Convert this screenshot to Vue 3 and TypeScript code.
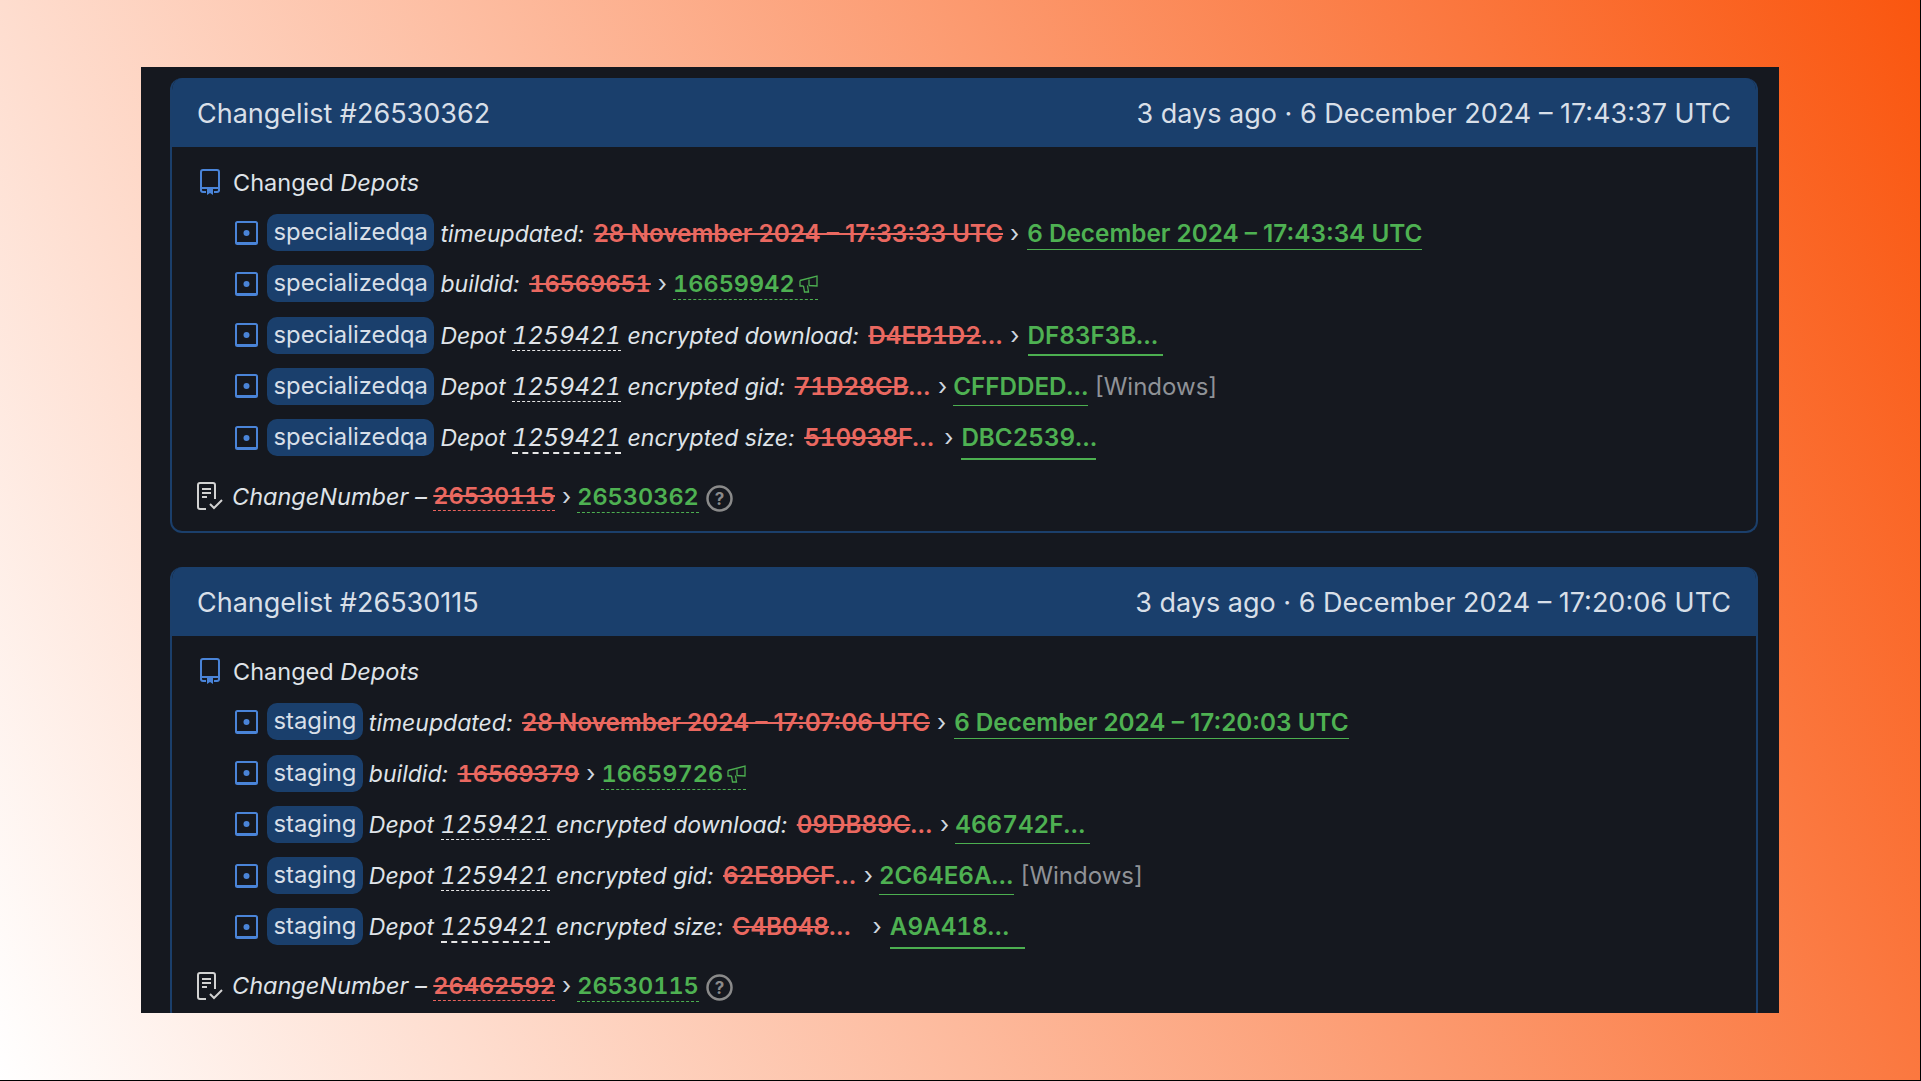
<script setup lang="ts">
type Kind = 'label' | 'old' | 'sep' | 'new' | 'ref' | 'muted';
interface Seg { k: Kind; t: string; u?: string; w?: number; mega?: boolean; thick?: boolean }
interface Row { segs: Seg[] }
interface Card {
  id: string; when: string; tag: string; rows: Row[]; oldN: string; newN: string;
}
const l = (t: string): Seg => ({ k: 'label', t });
const o = (t: string, w?: number): Seg => ({ k: 'old', t, w });
const s: Seg = { k: 'sep', t: '›' };
const n = (t: string, u = 'solid', w?: number, mega = false): Seg => ({ k: 'new', t, u, w, mega });
const ref = (thick = false): Seg => ({ k: 'ref', t: '1259421', thick });

const body = (t: string) => t.replace('...', '');
const dots = (t: string) => (t.endsWith('...') ? '...' : '');
const shape = (t: string) => (/^\d+$/.test(t) ? 'num' : t.includes('–') ? 'date' : 'hex');

const build = (a: string[], u: string[]): Row[] => [
  { segs: [l('timeupdated: '), o(a[0]), s, n(a[1], 'line')] },
  { segs: [l('buildid: '), o(a[2]), s, n(a[3], 'dashed', undefined, true)] },
  { segs: [l('Depot '), ref(), l(' encrypted download: '), o(a[4]), s, n(a[5], u[0], 135)] },
  { segs: [l('Depot '), ref(), l(' encrypted gid: '), o(a[6]), s, n(a[7], u[1], 135), { k: 'muted', t: ' [Windows]' }] },
  { segs: [l('Depot '), ref(true), l(' encrypted size: '), o(a[8], 133), s, n(a[9], u[2], 135)] },
];

const cards: Card[] = [
  {
    id: '26530362', when: '3 days ago · 6 December 2024 – 17:43:37 UTC', tag: 'specializedqa',
    rows: build([
      '28 November 2024 – 17:33:33 UTC', '6 December 2024 – 17:43:34 UTC',
      '16569651', '16659942',
      'D4EB1D2...', 'DF83F3B...',
      '71D28CB...', 'CFFDDED...',
      '510938F...', 'DBC2539...',
    ], ['hash-b', 'hash-a', 'hash-c']),
    oldN: '26530115', newN: '26530362',
  },
  {
    id: '26530115', when: '3 days ago · 6 December 2024 – 17:20:06 UTC', tag: 'staging',
    rows: build([
      '28 November 2024 – 17:07:06 UTC', '6 December 2024 – 17:20:03 UTC',
      '16569379', '16659726',
      '09DB89C...', '466742F...',
      '62E8DCF...', '2C64E6A...',
      'C4B048...', 'A9A418...',
    ], ['hash-a', 'hash-a', 'hash-c']),
    oldN: '26462592', newN: '26530115',
  },
];
</script>

<template>
  <div class="page">
    <main class="panel">
      <section v-for="card in cards" :key="card.id" class="card">
        <header class="head">
          <span>Changelist #{{ card.id }}</span>
          <span>{{ card.when }}</span>
        </header>
        <div class="body">
          <div class="title">
            <svg class="book" viewBox="0 0 20 26" fill="none" stroke="#4a84d8" stroke-width="2">
              <path d="M1 22V3a2 2 0 0 1 2-2h14a2 2 0 0 1 2 2v19" />
              <path d="M1 19h18" />
              <path d="M1 21a2 2 0 0 0 2 2h3M19 21a2 2 0 0 1-2 2h-3" />
              <path d="M7 20h6v6l-3-2-3 2z" fill="#4a84d8" stroke="none" />
            </svg>
            <span>Changed <em>Depots</em></span>
          </div>
          <ul class="rows">
            <li v-for="(row, i) in card.rows" :key="i" class="row">
              <svg class="sq" viewBox="0 0 23 24" fill="none">
                <rect x="1" y="1" width="21" height="22" rx="1.500" stroke="#4a84d8" stroke-width="2" />
                <path d="M1 22h21" stroke="#4a84d8" stroke-width="2" />
                <circle cx="11.500" cy="12" r="3" fill="#4a84d8" />
              </svg>
              <span class="tag">{{ card.tag }}</span>
              <span class="text">
                <template v-for="(seg, j) in row.segs" :key="j">
                  <span v-if="seg.k === 'label'" class="label">{{ seg.t }}</span>
                  <span v-else-if="seg.k === 'ref'" class="label ref" :class="{ thick: seg.thick }">{{ seg.t }}</span>
                  <span v-else-if="seg.k === 'old'" class="old" :class="shape(seg.t)" :style="seg.w ? { width: seg.w + 'px' } : undefined"><span class="strike">{{ body(seg.t) }}</span><span class="dots">{{ dots(seg.t) }}</span></span>
                  <span v-else-if="seg.k === 'sep'" class="sep">{{ seg.t }}</span>
                  <span v-else-if="seg.k === 'new'" class="new" :class="[seg.u, shape(seg.t)]" :style="seg.w ? { width: seg.w + 'px' } : undefined">{{ body(seg.t) }}<span class="dots">{{ dots(seg.t) }}</span><svg v-if="seg.mega" class="mega" viewBox="0 0 19 18" fill="none" stroke="#4caf50" stroke-width="1.300"><path d="M1 5.500 18 1v10l-8-.5M1 5.500V11h3.500M10 4.500v6M4.500 11l1 6h4l-1-6.500" /></svg></span>
                  <span v-else-if="seg.k === 'muted'" class="muted">{{ seg.t }}</span>
                </template>
              </span>
            </li>
          </ul>
          <div class="change">
            <svg class="doc" viewBox="0 0 26 28" fill="none" stroke="#d2d2d2" stroke-width="2">
              <path d="M9 27H3a2 2 0 0 1-2-2V3a2 2 0 0 1 2-2h13a2 2 0 0 1 2 2v14" />
              <path d="M5 7h9M5 11h9M5 15h5" />
              <path d="M13 22l4 4 8-8" />
            </svg>
            <span class="label big">ChangeNumber – </span><span class="old num dash"><span class="strike">{{ card.oldN }}</span></span><span class="sep">›</span><span class="new num dashed">{{ card.newN }}</span>
            <svg class="help" viewBox="0 0 27 27" fill="none">
              <circle cx="13.500" cy="13.500" r="12" stroke="#8a8a8a" stroke-width="2.500" />
              <text x="13.500" y="19.500" text-anchor="middle" class="q">?</text>
            </svg>
          </div>
        </div>
      </section>
    </main>
  </div>
</template>

<style>
html, body { margin: 0; padding: 0; background: #000; }
</style>

<style scoped>
.page {
  box-sizing: border-box;
  width: 1920px;
  height: 1080px;
  padding: 67px 141px;
  background: linear-gradient(66deg, #ffffff 0%, #fa560f 100%);
  font-family: Inter, "Liberation Sans", sans-serif;
  overflow: hidden;
}
.panel {
  box-sizing: border-box;
  width: 1638px;
  height: 946px;
  padding: 11px 21px 0 29px;
  background: #15181f;
  overflow: hidden;
  color: #dfe3e8;
}
.card {
  margin-bottom: 34px;
  border: 2px solid #1b3f6b;
  border-top: 0;
  border-radius: 12px;
  overflow: hidden;
}
.head {
  display: flex;
  justify-content: space-between;
  align-items: center;
  height: 69px;
  margin: 0 -2px;
  padding: 2px 27px 0 27px;
  box-sizing: border-box;
  background: #1a3f6c;
  font-size: 27px;
  color: #d8dfe8;
}
.body { padding: 16px 24px 16px; }
.title, .change {
  display: flex;
  align-items: center;
  height: 38px;
  font-size: 24px;
  color: #dfe3e8;
  white-space: pre;
}
.title { font-size: 23.500px; }
.book { width: 20px; height: 26px; margin: 0 13px 0 4px; flex: none; }
.doc { width: 26px; height: 28px; margin: 0 9px 0 1px; flex: none; }
.rows { list-style: none; margin: 6px 0 14px; padding: 0 0 0 39px; }
.row {
  display: flex;
  align-items: center;
  height: 51.250px;
  font-size: 24px;
}
.sq { width: 23px; height: 24px; margin-right: 9px; flex: none; }
.tag {
  padding: 3px 6.500px 4px;
  border-radius: 10px;
  background: #1a3f6c;
  font-size: 23.800px;
  line-height: 30px;
  color: #d8dfe8;
  margin-right: 6px;
}
.text { white-space: pre; display: block; }
.label { font-style: italic; font-size: 23px; }
.label.big { font-size: 23.500px; }
.ref {
  display: inline-block;
  font-size: 24px;
  font-variant-numeric: tabular-nums;
  border-bottom: 1px dashed #e6e6e6;
  margin-bottom: -1px;
}
.ref.thick { border-bottom-width: 2px; margin-bottom: -2px; }
.old {
  display: inline-block;
  color: #ea6860;
  font-size: 24.200px;
  font-weight: 600;
}
.text .old { margin-left: 3px; }
.strike { text-decoration: line-through; }
.dots { letter-spacing: 1px; }
.dash { border-bottom: 1px dashed #e9635d; }
.sep { margin: 0 6px 0 7px; color: #cfd6df; }
.new {
  display: inline-block;
  color: #4eb152;
  font-size: 24.200px;
  font-weight: 600;
}
.num, .hex { font-variant-numeric: tabular-nums; }
.num { font-size: 23.500px; }
.date { font-size: 24.300px; }
.new.date { margin-left: 2px; }
.new.line { border-bottom: 1px solid #4caf50; padding-bottom: 1px; margin-bottom: -2px; }
.new.dashed { border-bottom: 1px dashed #4caf50; padding-bottom: 1px; margin-bottom: -2px; }
.new.hash-a { border-bottom: 1px solid #4caf50; padding-bottom: 4px; margin-bottom: -5px; }
.new.hash-b { border-bottom: 2px solid #4caf50; padding-bottom: 4px; margin: 0 0 -6px 2px; }
.new.hash-c { border-bottom: 2px solid #4caf50; padding-bottom: 6px; margin: 0 0 -8px 2px; }
.mega { width: 19px; height: 18px; margin-left: 4px; vertical-align: -1px; }
.muted { color: #8f9297; }
.help { width: 27px; height: 27px; margin: 4px 0 0 7px; flex: none; }
.q { font: 700 17px Inter, sans-serif; fill: #8a8a8a; }
</style>
